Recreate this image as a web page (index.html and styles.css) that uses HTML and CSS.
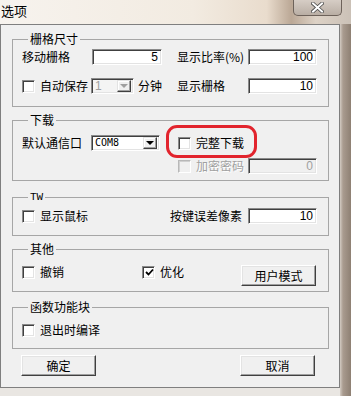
FILE: index.html
```html
<!DOCTYPE html>
<html lang="zh-CN">
<head>
    <meta charset="UTF-8">
    <meta name="viewport" content="width=device-width, initial-scale=1.0">
    <title>选项</title>
    <link rel="stylesheet" href="styles.css">
</head>
<body>
<div class="window">
    <div class="titlebar">
        <span class="title">选项</span>
        <div class="close">
            <svg width="13" height="11" viewBox="0 0 13 11">
                <path d="M2 1.5 L11 9.5 M11 1.5 L2 9.5" stroke="#4a4a4a" stroke-width="3.6" stroke-linecap="square"/>
                <path d="M2 1.5 L11 9.5 M11 1.5 L2 9.5" stroke="#fff" stroke-width="2" stroke-linecap="square"/>
            </svg>
        </div>
    </div>

    <div class="frame">
        <div class="client">

            <!-- grid size -->
            <fieldset class="group g1">
                <legend>栅格尺寸</legend>
                <div class="row">
                    <span class="lbl w70">移动栅格</span>
                    <input class="edit w70" type="text" value="5">
                    <span class="lbl ml15">显示比率(%)</span>
                    <input class="edit w69 right" type="text" value="100">
                </div>
                <div class="row r2">
                    <label class="chk"><span class="box"></span>自动保存</label>
                    <span class="combo small disabled">
                        <span class="val">1</span>
                        <span class="drop"><span class="arrow"></span></span>
                    </span>
                    <span class="lbl ml4">分钟</span>
                    <span class="lbl ml15">显示栅格</span>
                    <input class="edit w69 right" type="text" value="10">
                </div>
            </fieldset>

            <!-- download -->
            <fieldset class="group g2">
                <legend>下载</legend>
                <div class="row">
                    <span class="lbl w69">默认通信口</span>
                    <span class="combo port">
                        <span class="val mono">COM8</span>
                        <span class="drop"><span class="arrow"></span></span>
                    </span>
                    <span class="mark">
                        <label class="chk"><span class="box"></span>完整下载</label>
                    </span>
                </div>
                <div class="row r2">
                    <label class="chk disabled ml156"><span class="box"></span>加密密码</label>
                    <input class="edit w69 right" type="text" value="0" disabled>
                </div>
            </fieldset>

            <!-- TW -->
            <fieldset class="group g3">
                <legend class="mono">TW</legend>
                <div class="row">
                    <label class="chk"><span class="box"></span>显示鼠标</label>
                    <span class="lbl right-lbl">按键误差像素</span>
                    <input class="edit w69" type="text" value="10">
                </div>
            </fieldset>

            <!-- other -->
            <fieldset class="group g4">
                <legend>其他</legend>
                <div class="row top">
                    <label class="chk"><span class="box"></span>撤销</label>
                    <label class="chk ml78"><span class="box checked">
                        <svg width="9" height="9" viewBox="0 0 9 9"><path d="M1 4 L3.5 6.5 L8 1.5" stroke="#000" stroke-width="1.8" fill="none"/></svg>
                    </span>优化</label>
                    <button class="btn mode">用户模式</button>
                </div>
            </fieldset>

            <!-- functions -->
            <fieldset class="group g5">
                <legend>函数功能块</legend>
                <div class="row">
                    <label class="chk"><span class="box"></span>退出时编译</label>
                </div>
            </fieldset>

            <div class="buttons">
                <button class="btn ok">确定</button>
                <button class="btn cancel">取消</button>
            </div>

        </div>
    </div>
</div>
</body>
</html>
```

FILE: styles.css
```css
*{
    margin: 0;
    padding: 0;
    box-sizing: border-box;
}
body{
    width: 351px;
    height: 396px;
    overflow: hidden;
    background: #e9e6e2;
    font-family: "Noto Sans CJK SC", sans-serif;
    font-size: 12px;
    color: #000;
}
.window{
    width: 351px;
    height: 396px;
    display: flex;
    flex-direction: column;
}

/* title bar, aero glass look */
.titlebar{
    height: 24px;
    display: flex;
    justify-content: space-between;
    align-items: flex-start;
    background: linear-gradient(to right, #f7f3ee 0%, #f2ebe1 55%, #e9dccd 76%, #bba896 83%, #ddd2c6 90%, #cbc1b7 100%);
}
.title{
    font-size: 13px;
    line-height: 14px;
    padding: 4px 0 0 1px;
}
.close{
    width: 49px;
    height: 16px;
    margin-right: 9px;
    border: 1px solid #6d625a;
    border-top: 0;
    border-radius: 0 0 5px 5px;
    background: linear-gradient(#d6cdc5, #b9aea4);
    display: flex;
    justify-content: center;
    align-items: center;
}

.frame{
    flex: 1;
    display: flex;
    background: linear-gradient(to right, transparent 340px, #d3cbc3 340px, #a99b8f 343px, #8e8073 351px);
}
.client{
    width: 340px;
    height: 364px;
    background: #f0f0f0;
    border: 1px solid #7f7f7f;
    padding: 7px 10px 0 11px;
}

/* group boxes */
.group{
    border: 1px solid #a6a6a6;
    width: 317px;
    min-width: 0;
    padding: 0 11px 0 9px;
}
.group legend{
    line-height: 14px;
    margin-left: 6px;
    padding: 0 2px;
}
.group legend.mono{
    font-family: "Liberation Mono", monospace;
    font-size: 11px;
}
.g1{ padding-top: 3px; padding-bottom: 12px; }
.g2{ margin-top: 6px; padding-top: 8px; padding-bottom: 6px; }
.g3{ margin-top: 9px; padding-top: 4px; padding-bottom: 11px; }
.g4{ margin-top: 6px; padding-top: 9px; padding-bottom: 5px; }
.g5{ margin-top: 8px; padding-top: 8px; padding-bottom: 10px; }

.row{
    display: flex;
    align-items: center;
    height: 16px;
}
.row.top{
    align-items: flex-start;
    height: 21px;
}
.g1 .r2{ margin-top: 13px; }
.g2 .r2{ margin-top: 7px; }

.lbl{
    line-height: 16px;
    white-space: nowrap;
}
.w70{ width: 70px; }
.w69{ width: 69px; }
.ml4{ margin-left: 4px; }
.ml15{ margin-left: 15px; width: 71px; }
.ml78{ margin-left: 78px; }
.ml156{ margin-left: 156px; }
.right-lbl{ margin-left: auto; margin-right: 6px; }

/* sunken edit box */
.edit{
    height: 16px;
    background: #fff;
    border: 1px solid;
    border-color: #8a8a8a #fff #fff #8a8a8a;
    box-shadow: inset 1px 1px 0 #404040, inset -1px -1px 0 #e3e3e3;
    font-family: "Liberation Sans", sans-serif;
    font-size: 12px;
    text-align: right;
    padding: 0 3px 0 2px;
    outline: 0;
    color: #000;
}
.edit.right{ margin-left: auto; }
.edit:disabled{
    background: #f0f0f0;
    color: #a0a0a0;
}

/* checkbox */
.chk{
    display: flex;
    align-items: center;
    white-space: nowrap;
    line-height: 14px;
}
.box{
    width: 13px;
    height: 13px;
    margin-right: 5px;
    background: #fff;
    border: 1px solid;
    border-color: #8a8a8a #fff #fff #8a8a8a;
    box-shadow: inset 1px 1px 0 #404040, inset -1px -1px 0 #e3e3e3;
    display: flex;
    align-items: center;
    justify-content: center;
}
.box svg{ margin: 1px 0 0 1px; }
.chk.disabled{
    color: #a0a0a0;
    text-shadow: 1px 1px 0 #fff;
}
.chk.disabled .box{
    background: #f0f0f0;
    border-color: #b8b8b8 #fff #fff #b8b8b8;
    box-shadow: inset 1px 1px 0 #d0d0d0;
}

/* red annotation ring drawn over the checkbox */
.mark{
    position: relative;
    margin-left: 18px;
}
.mark::after{
    content: "";
    position: absolute;
    left: -12px;
    top: -11px;
    right: -13px;
    bottom: -8px;
    border: 3px solid #e2242d;
    border-radius: 11px;
}

/* combo box */
.combo{
    height: 16px;
    display: flex;
    align-items: center;
    justify-content: space-between;
    background: #fff;
    border: 1px solid;
    border-color: #8a8a8a #fff #fff #8a8a8a;
    box-shadow: inset 1px 1px 0 #404040, inset -1px -1px 0 #e3e3e3;
    padding: 2px 2px 2px 3px;
}
.combo.small{
    width: 43px;
    margin-left: 3px;
}
.combo.port{ width: 69px; }
.combo .val{
    font-family: "Liberation Sans", sans-serif;
    font-size: 12px;
    line-height: 12px;
}
.combo .val.mono{
    font-family: "DejaVu Sans Mono", monospace;
    font-size: 10px;
}
.combo.disabled{ background: #f4f4f4; }
.combo.disabled .val{ color: #a0a0a0; }
.drop{
    width: 14px;
    height: 12px;
    background: #f0f0f0;
    border: 1px solid;
    border-color: #e3e3e3 #404040 #404040 #e3e3e3;
    box-shadow: inset -1px -1px 0 #a0a0a0, inset 1px 1px 0 #fff;
    display: flex;
    align-items: center;
    justify-content: center;
}
.arrow{
    width: 0;
    height: 0;
    border-left: 4px solid transparent;
    border-right: 4px solid transparent;
    border-top: 4px solid #000;
}
.disabled .arrow{
    border-top-color: #a0a0a0;
}

/* push buttons */
.btn{
    height: 21px;
    width: 75px;
    background: #f0f0f0;
    border: 1px solid;
    border-color: #fff #404040 #404040 #fff;
    box-shadow: inset -1px -1px 0 #a0a0a0, inset 1px 1px 0 #e3e3e3;
    font-family: "Noto Sans CJK SC", sans-serif;
    font-size: 12px;
    color: #000;
}
.btn.mode{
    margin-left: auto;
    margin-right: 1px;
}
.buttons{
    display: flex;
    justify-content: space-between;
    margin-top: 6px;
    padding: 0 14px 0 9px;
}
```
